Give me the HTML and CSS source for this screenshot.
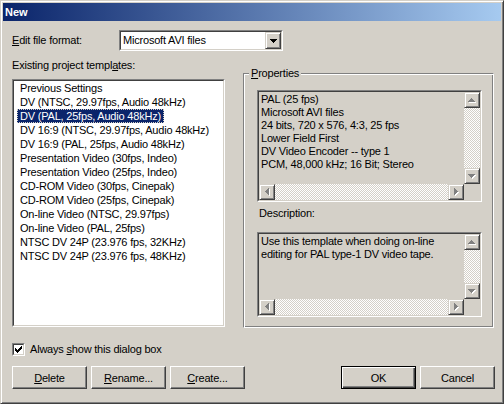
FILE: index.html
```html
<!DOCTYPE html>
<html>
<head>
<meta charset="utf-8">
<link rel="stylesheet" href="styles.css">
</head>
<body>
<div class="window">
  <div class="titlebar">New</div>
  <div class="dialog">
    <div class="row-format">
      <div class="lbl-format"><u>E</u>dit file format:</div>
      <div class="sunken combo">
        <div class="sunken-in combo-in">
          <span class="combo-text">Microsoft AVI files</span>
          <span class="raised combo-btn">
            <svg width="7" height="4" viewBox="0 0 7 4" shape-rendering="crispEdges"><path d="M0 0h7v1h-1v1h-1v1h-1v1h-1v-1h-1v-1h-1v-1h-1z" fill="#000"/></svg>
          </span>
        </div>
      </div>
    </div>

    <div class="main">
      <div class="left">
        <div class="lbl">Existing project templ<u>a</u>tes:</div>
        <div class="sunken listbox">
          <div class="sunken-in listbox-in">
            <div class="item"><span>Previous Settings</span></div>
            <div class="item"><span>DV (NTSC, 29.97fps, Audio 48kHz)</span></div>
            <div class="item selected"><span>DV (PAL, 25fps, Audio 48kHz)</span></div>
            <div class="item"><span>DV 16:9 (NTSC, 29.97fps, Audio 48kHz)</span></div>
            <div class="item"><span>DV 16:9 (PAL, 25fps, Audio 48kHz)</span></div>
            <div class="item"><span>Presentation Video (30fps, Indeo)</span></div>
            <div class="item"><span>Presentation Video (25fps, Indeo)</span></div>
            <div class="item"><span>CD-ROM Video (30fps, Cinepak)</span></div>
            <div class="item"><span>CD-ROM Video (25fps, Cinepak)</span></div>
            <div class="item"><span>On-line Video (NTSC, 29.97fps)</span></div>
            <div class="item"><span>On-line Video (PAL, 25fps)</span></div>
            <div class="item"><span>NTSC DV 24P (23.976 fps, 32KHz)</span></div>
            <div class="item"><span>NTSC DV 24P (23.976 fps, 48KHz)</span></div>
          </div>
        </div>
      </div>

      <fieldset class="group">
        <legend><u>P</u>roperties</legend>
        <div class="sunken textbox props">
          <div class="sunken-in tb-grid">
            <div class="tb-text">PAL (25 fps)<br>Microsoft AVI files<br>24 bits, 720 x 576, 4:3, 25 fps<br>Lower Field First<br>DV Video Encoder -- type 1<br>PCM, 48,000 kHz; 16 Bit; Stereo</div>
            <div class="vscroll">
              <span class="raised sbtn"><svg width="14" height="14" viewBox="0 0 14 14" shape-rendering="crispEdges"><path transform="translate(4 6)" d="M3 0h1v1h1v1h1v1h1v1H0V3h1V2h1V1h1z" fill="#fff"/><path transform="translate(3 5)" d="M3 0h1v1h1v1h1v1h1v1H0V3h1V2h1V1h1z" fill="#808080"/></svg></span>
              <span class="trough"></span>
              <span class="raised sbtn"><svg width="14" height="14" viewBox="0 0 14 14" shape-rendering="crispEdges"><path transform="translate(4 6)" d="M0 0h7v1h-1v1h-1v1h-1v1h-1v-1h-1v-1h-1v-1h-1z" fill="#fff"/><path transform="translate(3 5)" d="M0 0h7v1h-1v1h-1v1h-1v1h-1v-1h-1v-1h-1v-1h-1z" fill="#808080"/></svg></span>
            </div>
            <div class="hscroll">
              <span class="raised sbtn"><svg width="14" height="14" viewBox="0 0 14 14" shape-rendering="crispEdges"><path transform="translate(6 4)" d="M3 0h1v7h-1v-1h-1v-1h-1v-1h-1v-1h1v-1h1v-1h1z" fill="#fff"/><path transform="translate(5 3)" d="M3 0h1v7h-1v-1h-1v-1h-1v-1h-1v-1h1v-1h1v-1h1z" fill="#808080"/></svg></span>
              <span class="trough"></span>
              <span class="raised sbtn"><svg width="14" height="14" viewBox="0 0 14 14" shape-rendering="crispEdges"><path transform="translate(6 4)" d="M0 0h1v1h1v1h1v1h1v1h-1v1h-1v1h-1v1h-1z" fill="#fff"/><path transform="translate(5 3)" d="M0 0h1v1h1v1h1v1h1v1h-1v1h-1v1h-1v1h-1z" fill="#808080"/></svg></span>
            </div>
            <div class="corner"></div>
          </div>
        </div>

        <div class="lbl desc-lbl">Description:</div>

        <div class="sunken textbox desc">
          <div class="sunken-in tb-grid">
            <div class="tb-text">Use this template when doing on-line<br>editing for PAL type-1 DV video tape.</div>
            <div class="vscroll">
              <span class="raised sbtn"><svg width="14" height="14" viewBox="0 0 14 14" shape-rendering="crispEdges"><path transform="translate(4 6)" d="M3 0h1v1h1v1h1v1h1v1H0V3h1V2h1V1h1z" fill="#fff"/><path transform="translate(3 5)" d="M3 0h1v1h1v1h1v1h1v1H0V3h1V2h1V1h1z" fill="#808080"/></svg></span>
              <span class="trough"></span>
              <span class="raised sbtn"><svg width="14" height="14" viewBox="0 0 14 14" shape-rendering="crispEdges"><path transform="translate(4 6)" d="M0 0h7v1h-1v1h-1v1h-1v1h-1v-1h-1v-1h-1v-1h-1z" fill="#fff"/><path transform="translate(3 5)" d="M0 0h7v1h-1v1h-1v1h-1v1h-1v-1h-1v-1h-1v-1h-1z" fill="#808080"/></svg></span>
            </div>
            <div class="hscroll">
              <span class="raised sbtn"><svg width="14" height="14" viewBox="0 0 14 14" shape-rendering="crispEdges"><path transform="translate(6 4)" d="M3 0h1v7h-1v-1h-1v-1h-1v-1h-1v-1h1v-1h1v-1h1z" fill="#fff"/><path transform="translate(5 3)" d="M3 0h1v7h-1v-1h-1v-1h-1v-1h-1v-1h1v-1h1v-1h1z" fill="#808080"/></svg></span>
              <span class="trough"></span>
              <span class="raised sbtn"><svg width="14" height="14" viewBox="0 0 14 14" shape-rendering="crispEdges"><path transform="translate(6 4)" d="M0 0h1v1h1v1h1v1h1v1h-1v1h-1v1h-1v1h-1z" fill="#fff"/><path transform="translate(5 3)" d="M0 0h1v1h1v1h1v1h1v1h-1v1h-1v1h-1v1h-1z" fill="#808080"/></svg></span>
            </div>
            <div class="corner"></div>
          </div>
        </div>
      </fieldset>
    </div>

    <div class="check-row">
      <span class="sunken checkbox"><span class="sunken-in check-in"><svg width="7" height="7" viewBox="0 0 7 7" shape-rendering="crispEdges"><path d="M6 0h1v3h-1v1h-1v1h-1v1h-1v1h-1v-1h-1v-1h-1v-3h1v1h1v1h1v-1h1v-1h1v-1h1z" fill="#000"/></svg></span></span>
      <span class="check-label">Always <u>s</u>how this dialog box</span>
    </div>

    <div class="buttons">
      <div class="btn-group">
        <div class="btn"><u>D</u>elete</div>
        <div class="btn"><u>R</u>ename...</div>
        <div class="btn"><u>C</u>reate...</div>
      </div>
      <div class="btn-group">
        <div class="btn default">OK</div>
        <div class="btn">Cancel</div>
      </div>
    </div>
  </div>
</div>
</body>
</html>
```

FILE: styles.css
```css
html, body {
  margin: 0;
  padding: 0;
  background: #d4d0c8;
}

body {
  font-family: "Liberation Sans", Arial, sans-serif;
  font-size: 11px;
  letter-spacing: -0.2px;
  color: #000;
}

u {
  text-decoration: underline;
  text-underline-offset: 1px;
}

.window {
  box-sizing: border-box;
  width: 504px;
  height: 404px;
  border: 1px solid;
  border-color: #d4d0c8 #404040 #404040 #d4d0c8;
  box-shadow: inset 1px 1px #fff, inset -1px -1px #808080;
  padding: 2px;
  background: #d4d0c8;
  display: flex;
  flex-direction: column;
}

.titlebar {
  height: 18px;
  line-height: 18px;
  padding-left: 2px;
  color: #fff;
  font-weight: bold;
  letter-spacing: 0;
  background: linear-gradient(to right, #0a246a, #a6caf0);
}

.dialog {
  flex: 1;
  padding: 9px 6px 0 9px;
  display: flex;
  flex-direction: column;
}

/* bevels */
.sunken {
  box-sizing: border-box;
  border: 1px solid;
  border-color: #808080 #fff #fff #808080;
}
.sunken-in {
  box-sizing: border-box;
  height: 100%;
  border: 1px solid;
  border-color: #404040 #d4d0c8 #d4d0c8 #404040;
}
.raised {
  box-sizing: border-box;
  border: 1px solid;
  border-color: #d4d0c8 #404040 #404040 #d4d0c8;
  box-shadow: inset 1px 1px #fff, inset -1px -1px #808080;
  background: #d4d0c8;
  display: flex;
  align-items: center;
  justify-content: center;
}

/* format row */
.row-format {
  display: flex;
  align-items: center;
  height: 21px;
}
.lbl-format {
  width: 107px;
  line-height: 13px;
}
.combo {
  width: 164px;
  height: 21px;
}
.combo-in {
  background: #fff;
  display: flex;
  align-items: stretch;
}
.combo-text {
  flex: 1;
  padding-left: 2px;
  line-height: 17px;
}
.combo-btn {
  width: 16px;
}
.combo-btn svg {
  margin-top: 1px;
}

/* main area */
.main {
  margin-top: 8px;
  display: grid;
  grid-template-columns: 213px 251px;
  column-gap: 18px;
  align-items: start;
}
.lbl {
  line-height: 13px;
  height: 13px;
}
.listbox {
  margin-top: 7px;
  height: 248px;
}
.listbox-in {
  background: #fff;
  padding-left: 3px;
}
.item {
  height: 14px;
  line-height: 14px;
  white-space: nowrap;
}
.item span {
  display: inline-block;
  padding: 0 3px;
}
.item.selected span {
  background: #0a246a;
  color: #fff;
  outline: 1px dotted #d4d0c8;
  outline-offset: -1px;
}

/* group box */
.group {
  margin: 7px 0 0 0;
  padding: 10px 11px 10px 13px;
  min-width: 0;
  border: 1px solid;
  border-color: #808080 #fff #fff #808080;
  box-shadow: inset 1px 1px #fff, inset -1px -1px #808080;
}
.group legend {
  padding: 0 2px;
  margin-left: -8px;
  line-height: 14px;
  background: #d4d0c8;
}

.textbox {
  width: 225px;
}
.props {
  height: 112px;
}
.desc {
  height: 85px;
}
.desc-lbl {
  margin: 5px 0 12px 2px;
}
.tb-grid {
  display: grid;
  grid-template-columns: 1fr 16px;
  grid-template-rows: 1fr 16px;
  background: #d4d0c8;
}
.tb-text {
  padding: 1px 0 0 2px;
  line-height: 13px;
  white-space: nowrap;
  overflow: hidden;
}
.vscroll {
  display: flex;
  flex-direction: column;
}
.hscroll {
  display: flex;
}
.sbtn {
  width: 16px;
  height: 16px;
  flex: none;
}
.sbtn svg {
  display: block;
}
.trough {
  flex: 1;
  background: repeating-conic-gradient(#fff 0 25%, #d4d0c8 0 50%) 0 0 / 2px 2px;
}
.corner {
  background: #d4d0c8;
}

/* checkbox */
.check-row {
  margin-top: 15px;
  display: flex;
  align-items: center;
  height: 13px;
}
.checkbox {
  width: 13px;
  height: 13px;
}
.check-in {
  background: #fff;
  display: flex;
  align-items: center;
  justify-content: center;
}
.check-label {
  margin-left: 5px;
  line-height: 13px;
}

/* buttons */
.buttons {
  margin-top: 10px;
  display: flex;
  justify-content: space-between;
}
.btn-group {
  display: flex;
  gap: 4px;
}
.btn {
  box-sizing: border-box;
  width: 75px;
  height: 23px;
  border: 1px solid;
  border-color: #fff #404040 #404040 #fff;
  box-shadow: inset -1px -1px #808080;
  display: flex;
  align-items: center;
  justify-content: center;
}
.btn.default {
  border-color: #000;
  box-shadow: inset 1px 1px #fff, inset -1px -1px #404040, inset -2px -2px #808080;
}
```
